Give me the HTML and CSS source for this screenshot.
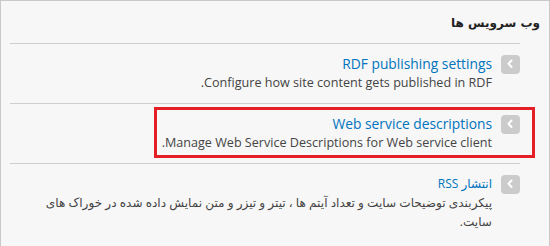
FILE: index.html
```html
<!DOCTYPE html>
<html lang="fa" dir="rtl">
<head>
<meta charset="utf-8">
<title>وب سرویس ها</title>
<link rel="stylesheet" href="styles.css">
</head>
<body>
<div class="panel">
  <h2 class="panel-title">وب سرویس ها</h2>
  <ul class="admin-list">
    <li class="item">
      <span class="icon"><svg width="19" height="19" viewBox="0 0 19 19"><path d="M10.5 5.5 L7.5 8.75 L10.5 12" fill="none" stroke="#fff" stroke-width="2" stroke-linecap="round" stroke-linejoin="round"/></svg></span>
      <div class="body">
        <a class="title" href="#" dir="ltr">RDF publishing settings</a>
        <div class="desc">Configure how site content gets published in RDF.</div>
      </div>
    </li>
    <li class="item highlighted">
      <span class="icon"><svg width="19" height="19" viewBox="0 0 19 19"><path d="M10.5 5.5 L7.5 8.75 L10.5 12" fill="none" stroke="#fff" stroke-width="2" stroke-linecap="round" stroke-linejoin="round"/></svg></span>
      <div class="body">
        <a class="title" href="#" dir="ltr">Web service descriptions</a>
        <div class="desc">Manage Web Service Descriptions for Web service client.</div>
      </div>
      <span class="mark"></span>
    </li>
    <li class="item">
      <span class="icon"><svg width="19" height="19" viewBox="0 0 19 19"><path d="M10.5 5.5 L7.5 8.75 L10.5 12" fill="none" stroke="#fff" stroke-width="2" stroke-linecap="round" stroke-linejoin="round"/></svg></span>
      <div class="body">
        <a class="title fa" href="#">انتشار RSS</a>
        <div class="desc fa">پیکربندی توضیحات سایت و تعداد آیتم ها ، تیتر و تیزر و متن نمایش داده شده در خوراک های سایت.</div>
      </div>
    </li>
  </ul>
</div>
</body>
</html>
```
FILE: styles.css
```css
html, body {
  margin: 0;
  padding: 0;
  background: #f7f7f7;
}
body {
  font-family: "Open Sans", "DejaVu Sans", sans-serif;
  color: #333;
}
.panel {
  box-sizing: border-box;
  width: 550px;
  height: 246px;
  border: 1px solid #c9c9c9;
  border-bottom: none;
  background: #f7f7f7;
  overflow: hidden;
}
.panel-title {
  margin: 0;
  padding: 12px 9px 0 0;
  font-family: "DejaVu Sans", sans-serif;
  font-size: 12px;
  line-height: 20px;
  font-weight: bold;
  color: #222;
}
.admin-list {
  list-style: none;
  margin: 10px 29px 0 9px;
  padding: 0;
}
.item {
  position: relative;
  display: flex;
  align-items: flex-start;
  gap: 9px;
  border-top: 1px solid #cfcfcf;
  padding: 11px 0 11px 0;
}
.icon {
  flex: none;
  width: 19px;
  height: 19px;
  border-radius: 4px;
  background: #cbcbcb;
  display: block;
}
.icon svg {
  display: block;
}
.body {
  flex: 1;
  padding-left: 20px;
}
.title {
  display: block;
  width: fit-content;
  font-size: 13.8px;
  line-height: 18px;
  color: #0074bd;
  text-decoration: none;
}
.title.fa {
  font-size: 12px;
}
.desc {
  font-size: 12.6px;
  line-height: 19px;
  color: #444;
}
.desc.fa {
  font-size: 12.1px;
}
.mark {
  position: absolute;
  top: 3px;
  right: -15px;
  width: 375px;
  height: 45px;
  border: 3px solid #e41f26;
}
```
